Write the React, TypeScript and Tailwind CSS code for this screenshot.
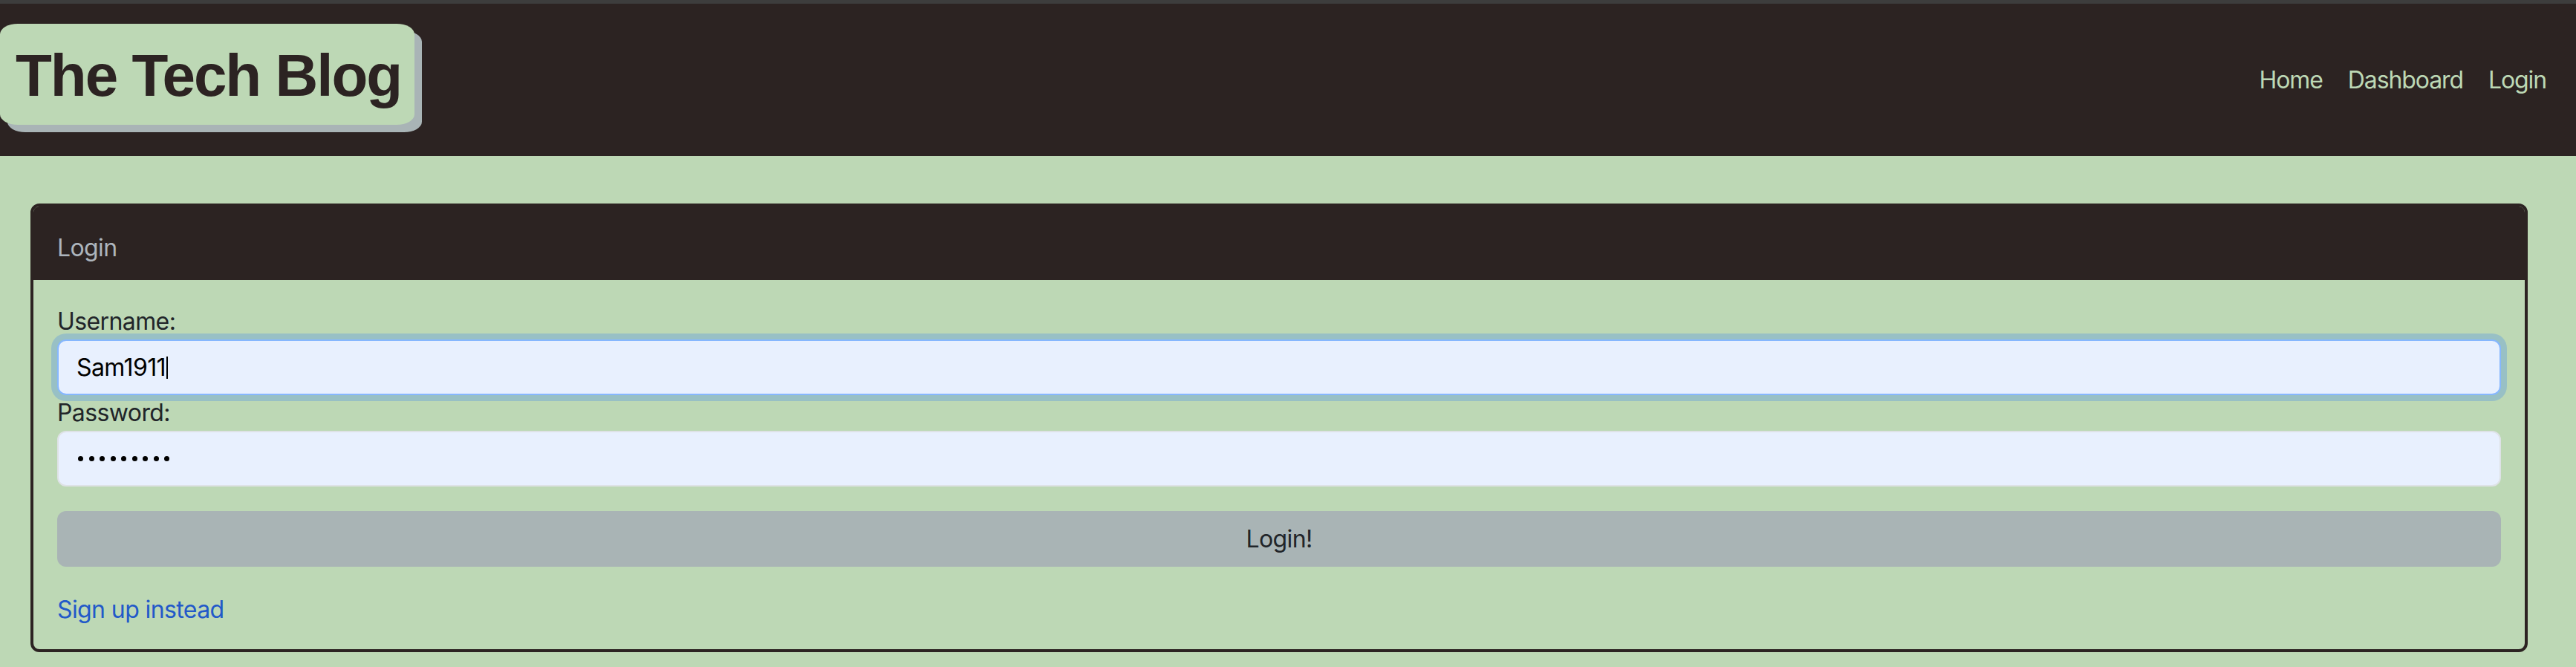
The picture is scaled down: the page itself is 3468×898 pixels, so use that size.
import React from "react";

const links = ["Home", "Dashboard", "Login"];

const Header = () => {
  return (
    <header className="h-[205px] bg-[#2c2322] flex items-start justify-between">
      <div className="mt-[27px] h-[136px] w-[558px] rounded-[24px/14px] bg-[#bdd8b5] shadow-[10px_10px_0_#a9b4b6] pl-[21px] pt-[30px]">
        <h1 className="font-['Liberation_Sans',Arial,sans-serif] font-bold text-[80px] leading-[80px] tracking-[-2px] text-[#2c2322]">
          The Tech Blog
        </h1>
      </div>
      <nav className="mt-[79px] mr-[40px] flex gap-[34px] text-[32px] leading-[48px] tracking-[-1.1px] text-[#bdd8b5]">
        {links.map((l) => (
          <a key={l} href="#">
            {l}
          </a>
        ))}
      </nav>
    </header>
  );
};

const LoginCard = () => {
  return (
    <div className="ml-[41px] w-[3362px] border-4 border-[#2c2322] rounded-[12px] overflow-hidden">
      <div className="bg-[#2c2322] px-[32px] pt-[32px] pb-[19px] text-[32px] leading-[48px] text-[#adb5bd]">
        Login
      </div>
      <form className="px-[32px] pt-[32px] pb-[29px] text-[32px] leading-[48px] text-[#212529]">
        <label className="block">Username:</label>
        <div className="h-[75px] rounded-[12px] border-2 border-[#86b7fe] bg-[#e8f0fe] shadow-[0_0_0_8px_#98c0c5] pl-[24px] flex items-center text-black">
          <span>Sam1911</span>
          <span className="ml-[1px] w-[2px] h-[30px] bg-black" />
        </div>
        <label className="block">Password:</label>
        <div className="h-[75px] rounded-[12px] border-2 border-[#dee2e6] bg-[#e8f0fe] pl-[26px] flex items-center gap-[7.5px]">
          {Array.from({ length: 9 }).map((_, i) => (
            <span key={i} className="size-[7px] rounded-full bg-black" />
          ))}
        </div>
        <button
          type="button"
          className="mt-[33px] h-[75px] w-full rounded-[12px] bg-[#a9b4b5] text-[#212529]"
        >
          Login!
        </button>
        <a href="#" className="mt-[34px] block w-fit text-[#2259c9]">
          Sign up instead
        </a>
      </form>
    </div>
  );
};

export default function App() {
  return (
    <div className="min-h-[898px] bg-[#bdd8b5] font-['Inter',sans-serif] tracking-[-0.6px]">
      <div className="h-[5px] bg-[#3d3d3d]" />
      <Header />
      <main className="pt-[64px]">
        <LoginCard />
      </main>
    </div>
  );
}
